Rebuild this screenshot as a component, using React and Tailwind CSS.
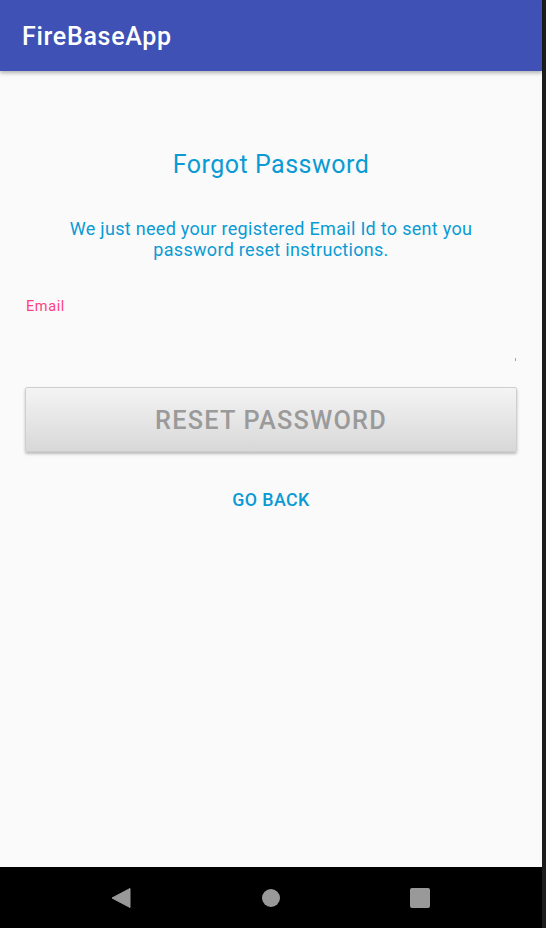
export default function App() {
  return (
    <div className="flex h-[928px] w-[546px] overflow-hidden" style={{ fontFamily: "Roboto, 'Noto Sans', sans-serif" }}>
      <div className="flex w-[542px] flex-col bg-[#fafafa]">
        <header className="relative z-10 flex h-[71px] items-center bg-[#3f51b5] pl-[22px] pt-[2px] shadow-[0_2px_4px_rgba(0,0,0,0.3)]">
          <span className="text-[25px] font-medium leading-[25px] tracking-[0.7px] text-white">FireBaseApp</span>
        </header>
        <main className="flex flex-1 flex-col">
          <h1 className="mt-[80px] text-center text-[25px] leading-[28px] tracking-[0.5px] text-[#0a9ad4]">Forgot Password</h1>
          <p className="mx-auto mt-[39px] w-[440px] text-center text-[18px] leading-[21px] tracking-[0.3px] text-[#0a9ad4]">
            We just need your registered Email Id to sent you password reset instructions.
          </p>
          <label className="ml-[26px] mt-[38px] text-[14.5px] leading-[18px] tracking-[0.6px] text-[#ff4081]">Email</label>
          <div className="flex h-[71px] justify-end pr-[26px]">
            <div className="mt-[42px] h-[3px] w-px bg-[#ff4081] opacity-70" />
          </div>
          <button className="mx-[25px] flex h-[65px] items-center justify-center rounded-[2px] border border-[#cfcfcf] bg-gradient-to-b from-[#f4f4f4] to-[#d8d8d8] pt-[2px] shadow-[0_2px_3px_rgba(0,0,0,0.25)]">
            <span className="text-[25.3px] font-medium leading-[25px] tracking-[1.2px] text-[#9a9a9a]">RESET PASSWORD</span>
          </button>
          <div className="mt-[37px] text-center text-[17.8px] font-medium leading-[22px] tracking-[0.4px] text-[#0a9ad4]">GO BACK</div>
        </main>
        <nav className="flex h-[61px] items-center bg-black pt-[1px]">
          <div className="ml-[111px]">
            <svg width="20" height="20" viewBox="0 0 20 20" className="block"><path d="M19 0.5 L19 19.5 L1 10 Z" fill="#999" strokeLinejoin="round" stroke="#999" strokeWidth="1" /></svg>
          </div>
          <div className="ml-[131px] h-[18px] w-[18px] rounded-full bg-[#999]" />
          <div className="ml-[130px] h-[20px] w-[20px] rounded-[2px] bg-[#999]" />
        </nav>
      </div>
      <div className="w-[4px] bg-[#1c1c1c]" />
    </div>
  );
}
